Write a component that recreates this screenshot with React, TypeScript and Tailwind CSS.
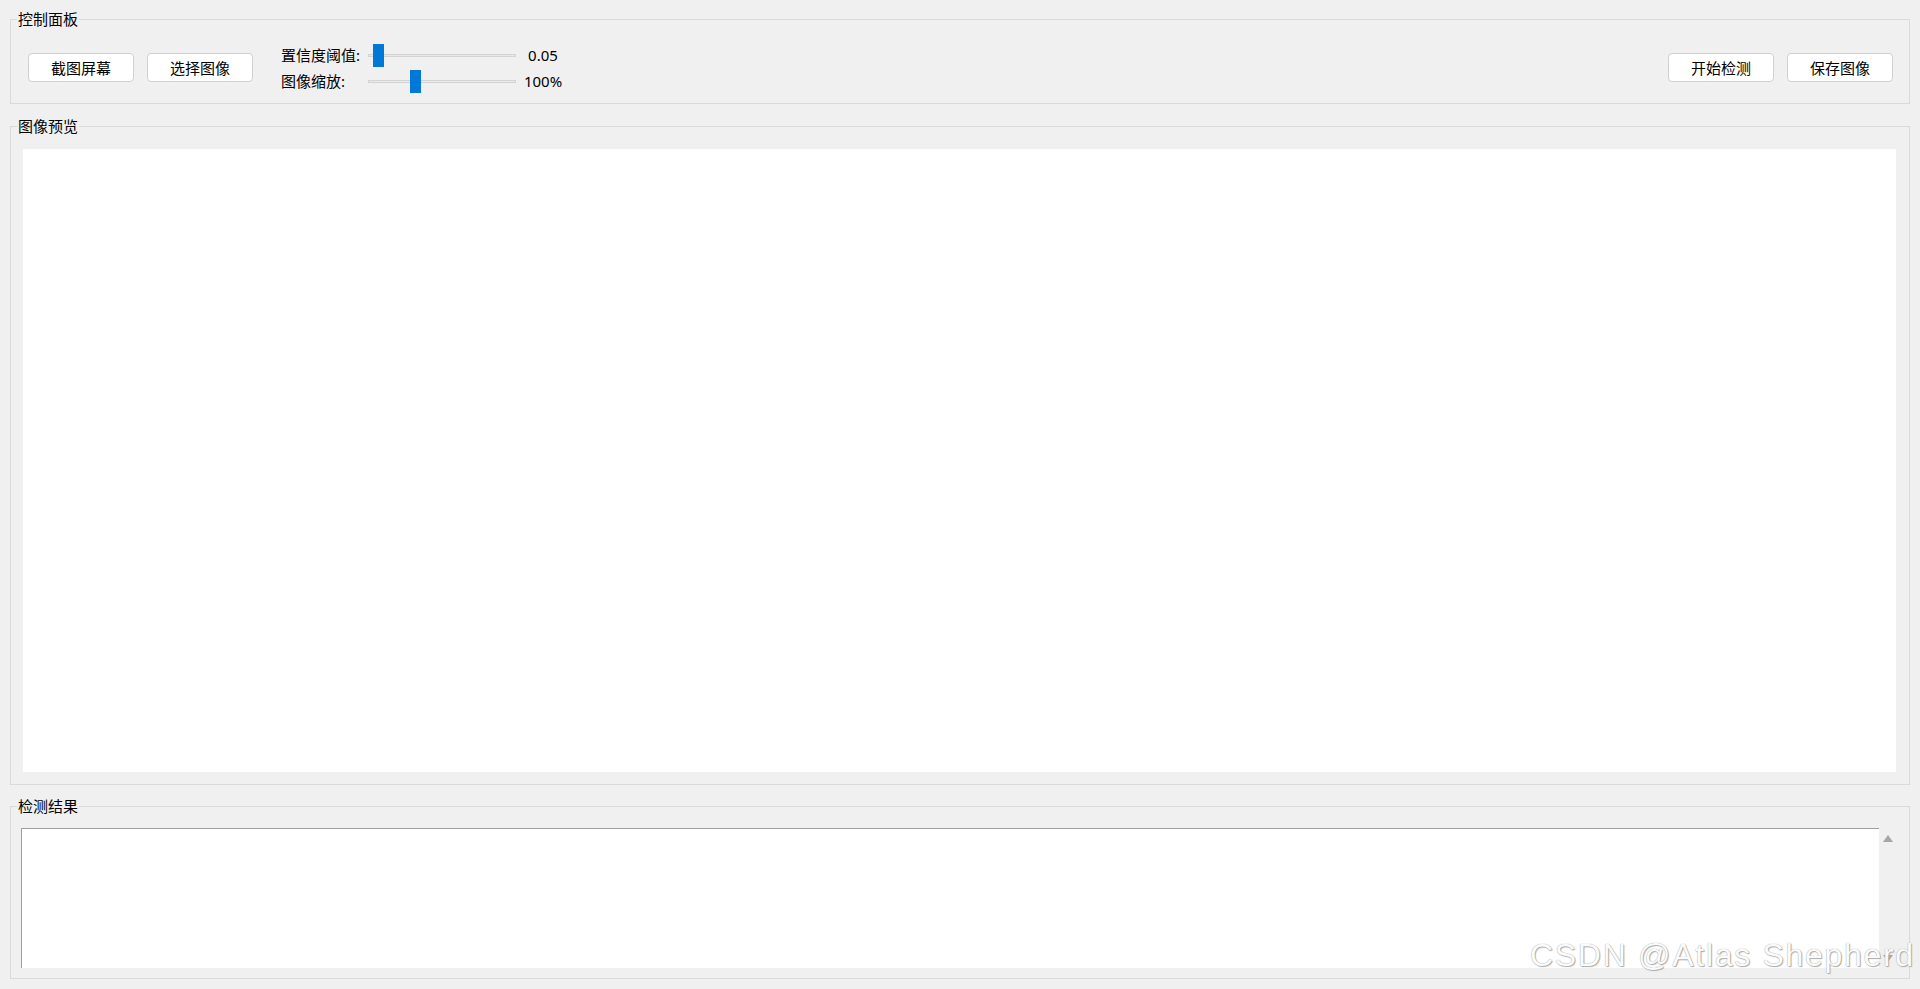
import type { ReactNode } from 'react'

function GroupBox({ title, className, children }: { title: string; className: string; children?: ReactNode }) {
  return (
    <div className={`relative border border-[#dadada] ${className}`}>
      <span className="absolute left-[6px] top-[-11px] bg-[#f0f0f0] px-[1px] text-[15px] leading-[20px] text-black">{title}</span>
      {children}
    </div>
  )
}

function PushButton({ label }: { label: string }) {
  return (
    <button className="w-[106px] h-[29px] rounded-[4px] border border-[#d0d0d0] bg-white text-[15px] leading-[20px] text-black">
      {label}
    </button>
  )
}

function SliderRow({ label, value, handle }: { label: string; value: string; handle: number }) {
  return (
    <div className="flex items-center h-[26px]">
      <span className="w-[87px] text-[15px] leading-[20px] text-black">{label}</span>
      <div className="relative w-[148px] h-[23px] flex items-center">
        <div className="w-full h-[3px] border border-[#d4d4d4] bg-[#e9e9e9]" />
        {handle === 0 ? (
          <div className="absolute left-[5px] top-0 w-[11px] h-[23px] bg-[#0078d7]" />
        ) : (
          <div className="absolute left-[42px] top-0 w-[11px] h-[23px] bg-[#0078d7]" />
        )}
      </div>
      <span className="w-[54px] text-center text-[15px] leading-[20px] text-black">{value}</span>
    </div>
  )
}

export default function App() {
  return (
    <div className="relative w-[1920px] h-[989px] overflow-hidden bg-[#f0f0f0] pt-[19px] px-[10px] flex flex-col font-['Noto_Sans','Noto_Sans_CJK_SC',sans-serif]">
      {/* control panel */}
      <GroupBox title="控制面板" className="h-[85px] flex items-start pl-[17px] pr-[16px]">
        <div className="mt-[33px] flex gap-[13px]">
          <PushButton label="截图屏幕" />
          <PushButton label="选择图像" />
        </div>
        <div className="ml-[28px] mt-[22px] flex flex-col">
          <SliderRow label="置信度阈值:" value="0.05" handle={0} />
          <SliderRow label="图像缩放:" value="100%" handle={1} />
        </div>
        <div className="ml-auto mt-[33px] flex gap-[13px]">
          <PushButton label="开始检测" />
          <PushButton label="保存图像" />
        </div>
      </GroupBox>

      {/* preview */}
      <GroupBox title="图像预览" className="mt-[22px] h-[659px] flex pt-[22px] pb-[12px] pl-[12px] pr-[13px]">
        <div className="flex-1 bg-white" />
      </GroupBox>

      {/* results */}
      <GroupBox title="检测结果" className="mt-[21px] h-[173px] flex pt-[21px] pb-[10px] pl-[10px] pr-[12px]">
        <div className="flex-1 bg-white border-t border-l border-[#a0a0a0]" />
        <div className="w-[18px] flex flex-col items-center justify-between pt-[7px] pb-[6px]">
          <svg width="10" height="7" viewBox="0 0 10 7"><path d="M5 0 L10 7 L0 7 Z" fill="#a6a6a6" /></svg>
          <svg width="10" height="7" viewBox="0 0 10 7"><path d="M0 0 L10 0 L5 7 Z" fill="#a6a6a6" /></svg>
        </div>
      </GroupBox>

      <span className="absolute left-[1530px] top-[939px] text-[32px] leading-[32px] tracking-[1.7px] text-[#fbfbfb] font-['Liberation_Sans',sans-serif] [text-shadow:0_0_1px_#8a8a8a,1px_1px_1px_#b0b0b0]">
        CSDN @Atlas Shepherd
      </span>
    </div>
  )
}
